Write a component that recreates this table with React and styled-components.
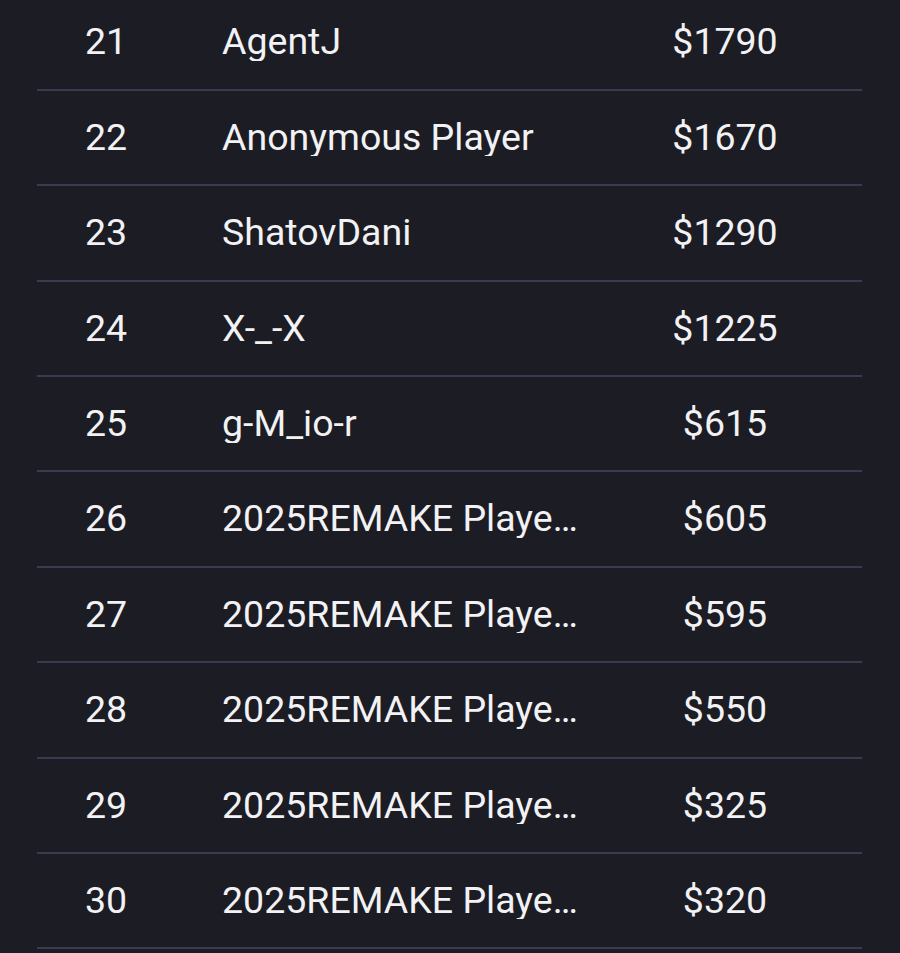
import React from "react";
import styled, { createGlobalStyle } from "styled-components";

const Global = createGlobalStyle`
  html, body { margin: 0; padding: 0; background: #1c1c24; overflow: hidden; }
  body { font-family: Roboto, "Noto Sans", sans-serif; }
`;

const Page = styled.div`
  width: 900px;
  height: 953px;
  background: #1c1c24;
  overflow: hidden;
  padding: 0 38px 0 37px;
  box-sizing: border-box;
`;

const List = styled.div`
  margin-top: -4.5px;
  display: flex;
  flex-direction: column;
`;

const Row = styled.div`
  display: grid;
  grid-template-columns: 138px 1fr 274px;
  align-items: center;
  height: 93.4px;
  border-bottom: 2px solid #3c3a4f;
  color: #f2f2f4;
  font-size: 37.5px;
  line-height: 1;
`;

const Rank = styled.div`
  text-align: center;
`;

const Name = styled.div`
  padding-left: 47px;
  padding-right: 6px;
  white-space: nowrap;
  overflow: hidden;
  text-overflow: ellipsis;
`;

const Amount = styled.div`
  text-align: center;
`;

const rows = [
  [21, "AgentJ", 1790],
  [22, "Anonymous Player", 1670],
  [23, "ShatovDani", 1290],
  [24, "X-_-X", 1225],
  [25, "g-M_io-r", 615],
  [26, "2025REMAKE Player 4821", 605],
  [27, "2025REMAKE Player 1937", 595],
  [28, "2025REMAKE Player 7702", 550],
  [29, "2025REMAKE Player 3356", 325],
  [30, "2025REMAKE Player 9014", 320],
];

export default function App() {
  return (
    <>
      <Global />
      <Page>
        <List>
          {rows.map(([rank, name, amt]) => (
            <Row key={rank}>
              <Rank>{rank}</Rank>
              <Name>{name}</Name>
              <Amount>${amt}</Amount>
            </Row>
          ))}
        </List>
      </Page>
    </>
  );
}
